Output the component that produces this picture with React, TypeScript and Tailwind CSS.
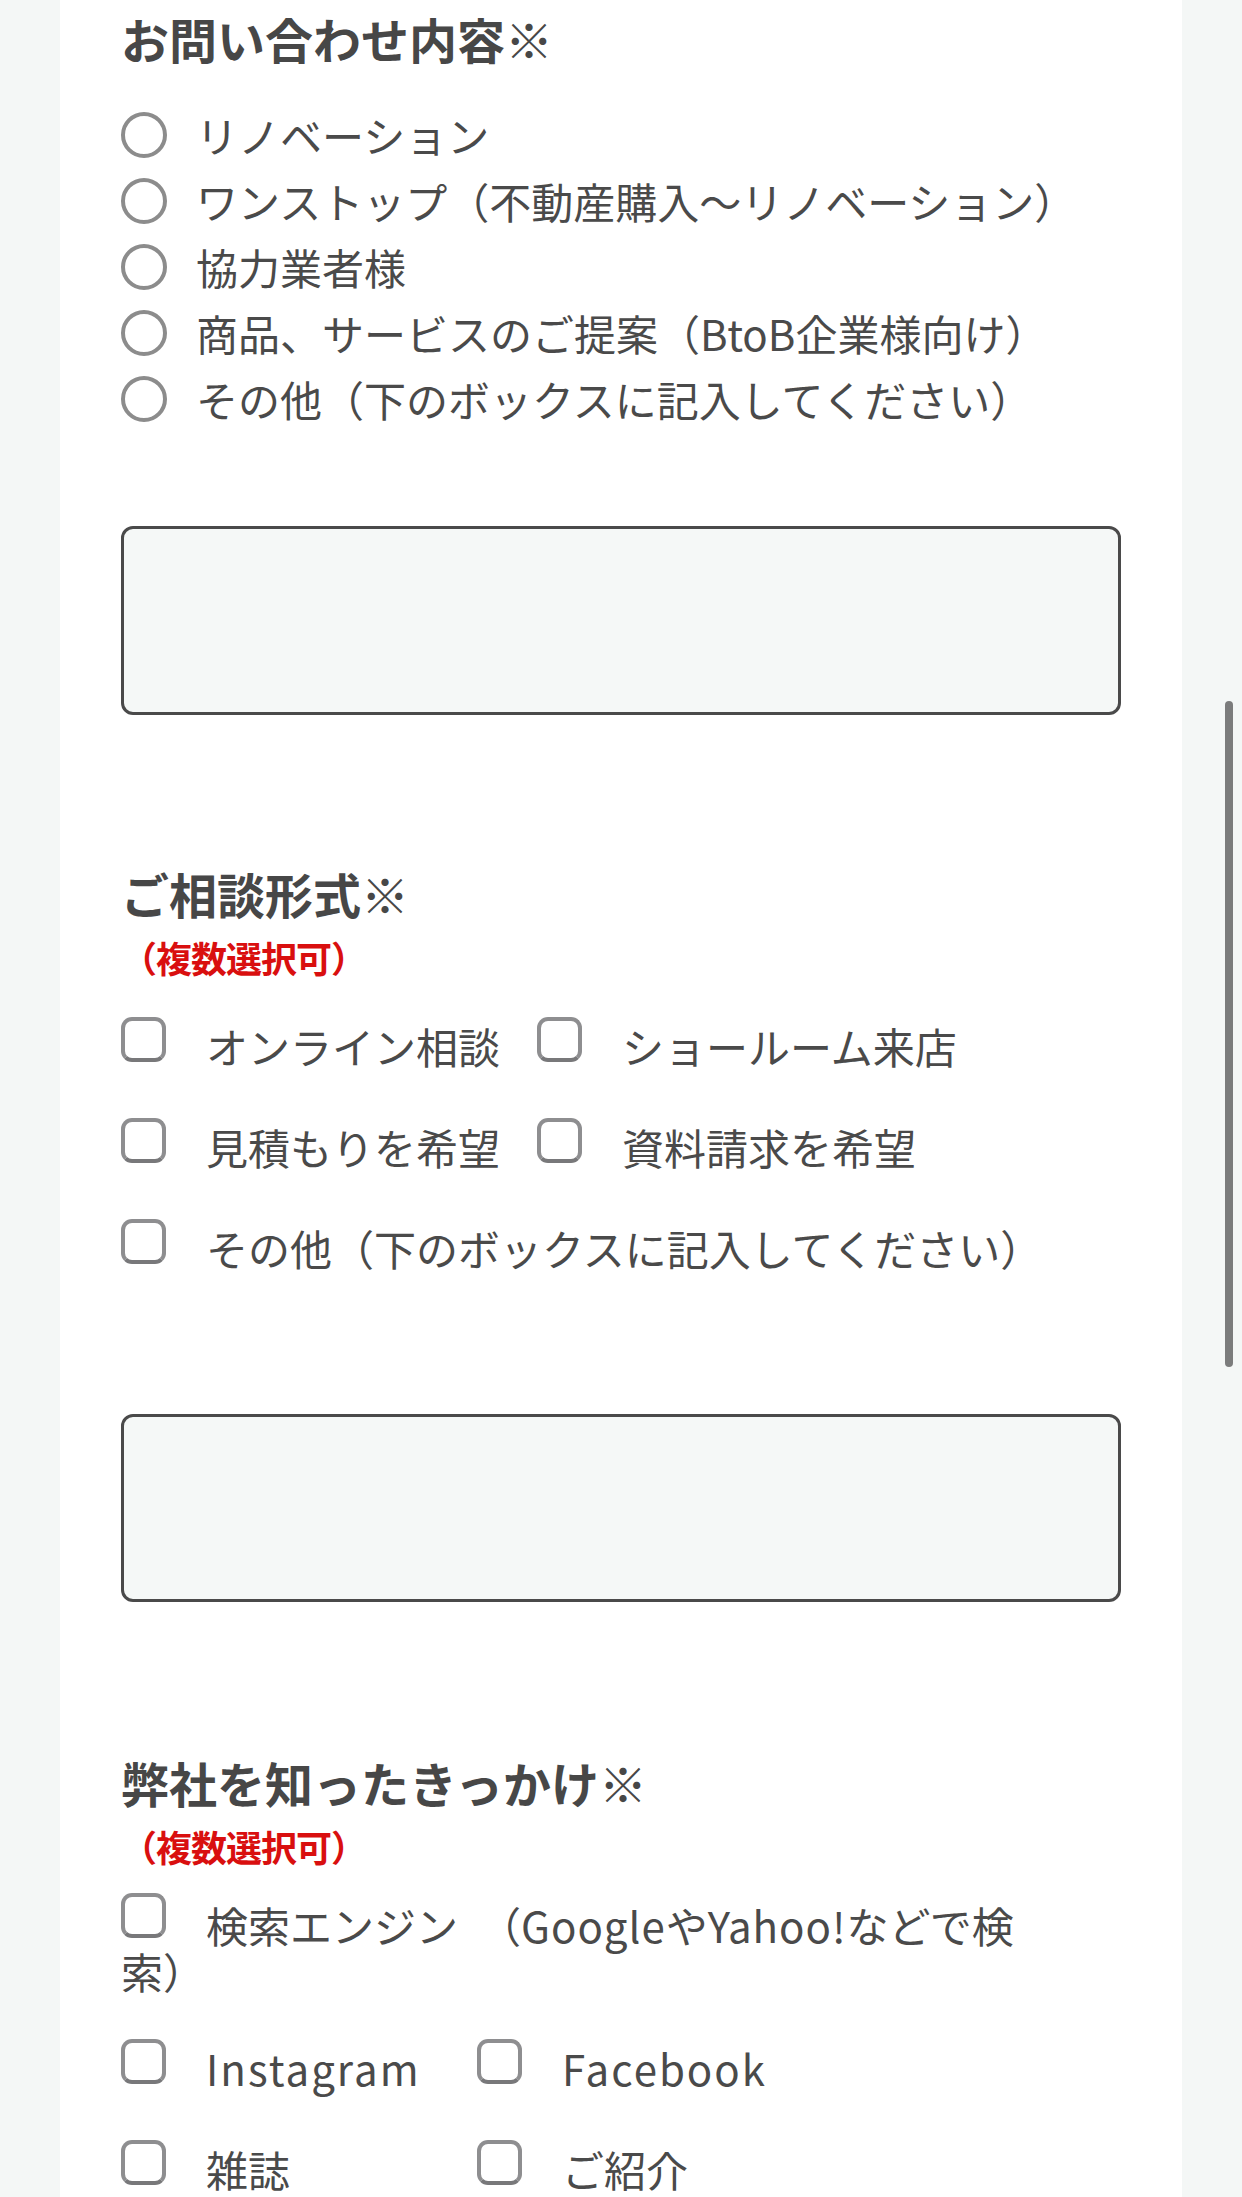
const radios = [
  "リノベーション",
  "ワンストップ（不動産購入〜リノベーション）",
  "協力業者様",
  "商品、サービスのご提案（BtoB企業様向け）",
  "その他（下のボックスに記入してください）",
];

const styles = ["オンライン相談", "ショールーム来店", "見積もりを希望", "資料請求を希望", "その他（下のボックスに記入してください）"];

function Box({ className = "" }: { className?: string }) {
  return (
    <span
      className={
        "shrink-0 w-[45px] h-[45px] rounded-[11px] border-[4px] border-[#8e8e90] border-b-[#78787a] bg-white " +
        className
      }
    />
  );
}

function Check({ label, latin = false }: { label: string; latin?: boolean }) {
  return (
    <label className="flex items-center min-w-[319px] mr-[37px] my-[27.5px] h-[46px]">
      <Box className="block mb-[13px]" />
      <span
        className={
          "ml-[40px] text-[42px] leading-[46px] text-[#4a4a4a] whitespace-nowrap " + (latin ? "tracking-[2px]" : "")
        }
      >
        {label}
      </span>
    </label>
  );
}

function Heading({ children, className = "" }: { children: React.ReactNode; className?: string }) {
  return <h2 className={"text-[48px] leading-[56px] font-bold text-[#474747] " + className}>{children}</h2>;
}

function Multi({ className = "" }: { className?: string }) {
  return (
    <p className={"text-[36px] leading-[40px] font-bold tracking-[-1px] text-[#d90f0f] " + className}>
      （複数選択可）
    </p>
  );
}

export default function App() {
  return (
    <div
      className="relative h-[2197px] overflow-hidden bg-[#f4f7f6]"
      style={{ fontFamily: '"Noto Sans CJK JP", "Noto Sans", sans-serif' }}
    >
      <div className="mx-[60px] h-full bg-white px-[61px] pt-[10px]">
        <Heading>お問い合わせ内容※</Heading>

        <div className="mt-[36px]">
          {radios.map((r) => (
            <label key={r} className="flex h-[66px] items-center">
              <span className="block w-[46px] h-[46px] shrink-0 rounded-full border-[4px] border-[#8c8c8c]" />
              <span className="ml-[29px] text-[42px] leading-[46px] text-[#4a4a4a] whitespace-nowrap">{r}</span>
            </label>
          ))}
        </div>

        <textarea className="mt-[94px] block h-[189px] w-full resize-none rounded-[12px] border-[3px] border-[#4a4a4a] bg-[#f5f8f7]" />

        <Heading className="mt-[150px]">ご相談形式※</Heading>
        <Multi className="mt-[16px]" />

        <div className="mt-[18px] flex flex-wrap">
          {styles.map((s) => (
            <Check key={s} label={s} />
          ))}
        </div>

        <textarea className="mt-[116px] block h-[188px] w-full resize-none rounded-[12px] border-[3px] border-[#4a4a4a] bg-[#f5f8f7]" />

        <Heading className="mt-[152px]">弊社を知ったきっかけ※</Heading>
        <Multi className="mt-[16px]" />

        <p className="mt-[36px] text-[42px] leading-[46px] text-[#4a4a4a]">
          <Box className="inline-block align-top -translate-y-[9px] mr-[40px]" />
          検索エンジン　（<span className="tracking-[1px]">Google</span>や<span className="tracking-[1px]">Yahoo!</span>などで検
          <br />
          索）
        </p>

        <div className="mt-[23px] flex flex-wrap">
          <Check label="Instagram" latin />
          <Check label="Facebook" latin />
          <Check label="雑誌" />
          <Check label="ご紹介" />
        </div>
      </div>

      <div className="absolute left-[1225px] top-[701px] h-[666px] w-[8px] rounded-full bg-[#7b7c7c]" />
    </div>
  );
}
